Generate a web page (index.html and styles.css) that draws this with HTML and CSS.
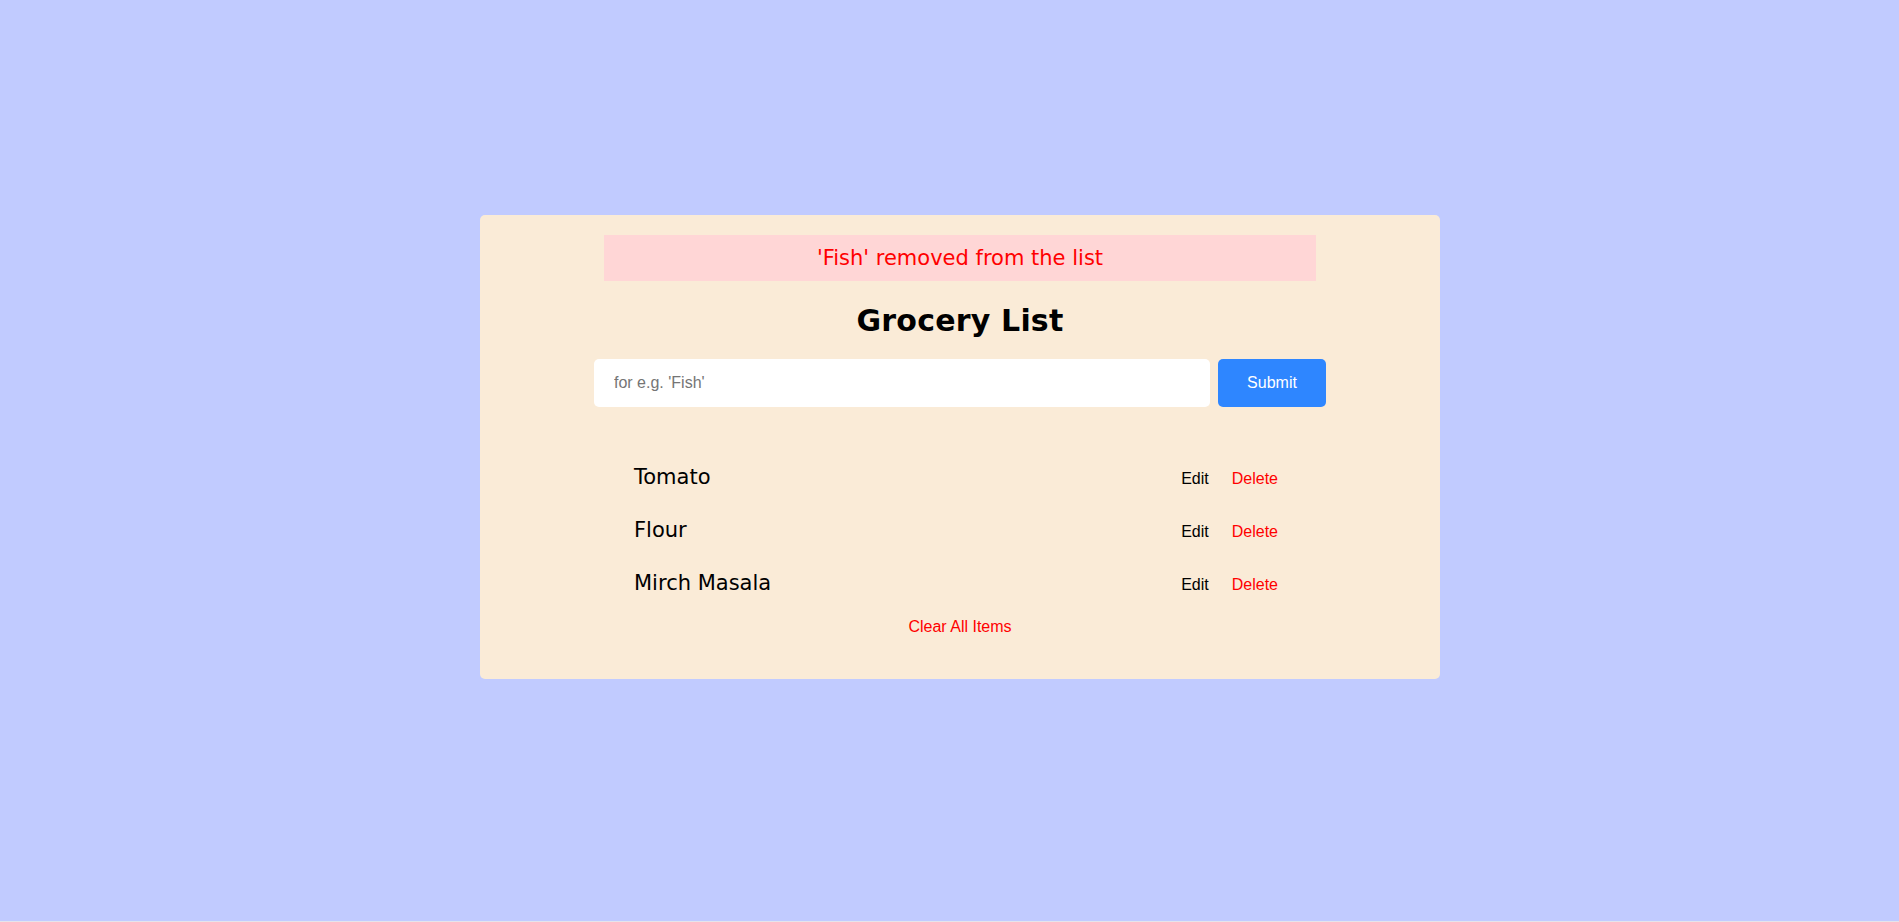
FILE: index.html
```html
<!DOCTYPE html>
<html lang="en">
<head>
<meta charset="utf-8">
<title>Grocery List</title>
<link rel="stylesheet" href="styles.css">
</head>
<body>
<main class="card">
  <p class="alert">'Fish' removed from the list</p>
  <h2 class="title">Grocery List</h2>
  <form class="form">
    <input class="input" type="text" placeholder="for e.g. 'Fish'">
    <button type="button" class="submit">Submit</button>
  </form>
  <ul class="list">
    <li class="item">
      <span class="name">Tomato</span>
      <span class="actions"><button type="button" class="edit">Edit</button><button type="button" class="delete">Delete</button></span>
    </li>
    <li class="item">
      <span class="name">Flour</span>
      <span class="actions"><button type="button" class="edit">Edit</button><button type="button" class="delete">Delete</button></span>
    </li>
    <li class="item">
      <span class="name">Mirch Masala</span>
      <span class="actions"><button type="button" class="edit">Edit</button><button type="button" class="delete">Delete</button></span>
    </li>
  </ul>
  <button type="button" class="clear">Clear All Items</button>
</main>
</body>
</html>
```

FILE: styles.css
```css
html {
  margin: 0;
  padding: 0;
  background: #e4e4ec;
}
body {
  margin: 0;
  background: #c1cbff;
  height: 921px;
  padding: 215px 0 0 21px;
  box-sizing: border-box;
  overflow: hidden;
  font-family: "DejaVu Sans", Verdana, sans-serif;
}
.card {
  width: 960px;
  margin: 0 auto;
  background: #faebd7;
  border-radius: 5px;
  padding: 20px 0 43px;
  box-sizing: border-box;
  display: flex;
  flex-direction: column;
  align-items: center;
}
.alert {
  margin: 0;
  width: 712px;
  height: 46px;
  background: #ffd6d6;
  color: #ff0000;
  font-size: 21px;
  display: flex;
  align-items: center;
  justify-content: center;
}
.title {
  margin: 22px 0 21px;
  font-size: 30px;
  letter-spacing: 0.2px;
  font-weight: bold;
  color: #000;
  line-height: normal;
}
.form {
  display: flex;
  gap: 8px;
  width: 732px;
  height: 48px;
}
.input {
  flex: 1;
  border: none;
  border-radius: 5px;
  background: #fff;
  padding: 0 20px;
  font-family: "Liberation Sans", Arial, sans-serif;
  font-size: 16px;
  outline: none;
}
.input::placeholder {
  color: #757575;
}
.submit {
  width: 108px;
  border: none;
  border-radius: 5px;
  background: #2e86ff;
  color: #fff;
  font-family: "Liberation Sans", Arial, sans-serif;
  font-size: 16px;
  padding: 0;
}
.list {
  list-style: none;
  margin: 43px 0 0;
  padding: 0;
  width: 652px;
}
.item {
  display: flex;
  align-items: center;
  justify-content: space-between;
  height: 53px;
}
.name {
  font-size: 21px;
  color: #000;
  line-height: normal;
}
.actions {
  display: flex;
  gap: 23px;
  padding: 5px 8px 0 0;
}
.edit, .delete, .clear {
  border: none;
  background: transparent;
  padding: 0;
  font-family: "Liberation Sans", Arial, sans-serif;
  font-size: 16px;
  line-height: normal;
}
.edit {
  color: #000;
}
.delete, .clear {
  color: #ff0000;
}
.clear {
  margin-top: 9px;
}
```
